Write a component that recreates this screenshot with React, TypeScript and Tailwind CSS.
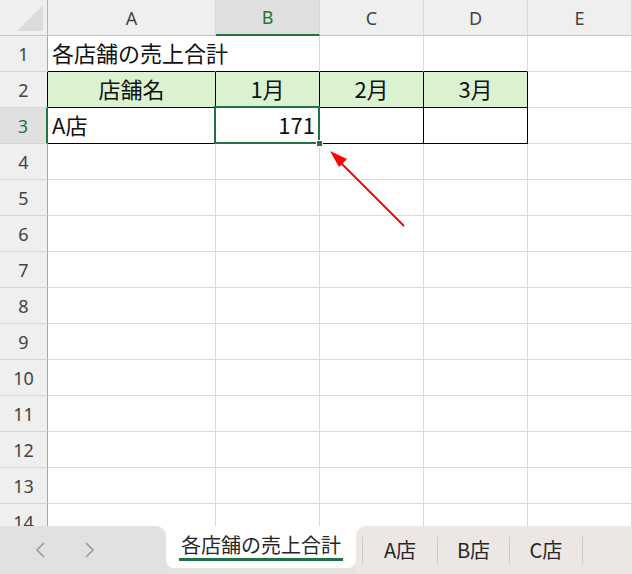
import React from "react";

type CellProps = {
  text?: string;
  align?: "left" | "center" | "right";
  fill?: boolean;
  right?: "grid" | "black" | "none";
  bottom?: "grid" | "black";
};

const cols = ["A", "B", "C", "D", "E"];

// sheet content, keyed by row number
const sheet: Record<number, CellProps[]> = {
  1: [
    { text: "各店舗の売上合計", align: "left", right: "none", bottom: "black" },
    { bottom: "black" },
    { bottom: "black" },
    { bottom: "black" },
    {},
  ],
  2: [
    { text: "店舗名", align: "center", fill: true, right: "black", bottom: "black" },
    { text: "1月", align: "center", fill: true, right: "black", bottom: "black" },
    { text: "2月", align: "center", fill: true, right: "black", bottom: "black" },
    { text: "3月", align: "center", fill: true, right: "black", bottom: "black" },
    {},
  ],
  3: [
    { text: "A店", align: "left", right: "black", bottom: "black" },
    { text: "171", align: "right", right: "black", bottom: "black" },
    { right: "black", bottom: "black" },
    { right: "black", bottom: "black" },
    {},
  ],
};

function Cell({ text, align = "left", fill, right = "grid", bottom = "grid" }: CellProps) {
  const r =
    right === "black" ? "border-r-black" : right === "none" ? "border-r-transparent" : "border-r-[#dadada]";
  const b = bottom === "black" ? "border-b-black" : "border-b-[#dadada]";
  const j = align === "center" ? "justify-center" : align === "right" ? "justify-end" : "justify-start";
  return (
    <div
      className={`relative flex h-[36px] items-center whitespace-nowrap border-r border-b px-[4px] pb-[3px] text-[22px] leading-none text-[#111] ${r} ${b} ${j} ${
        fill ? "bg-[#daf2d0]" : ""
      }`}
      style={{ fontFamily: '"Noto Sans CJK JP", "Noto Sans", sans-serif' }}
    >
      {text}
    </div>
  );
}

function RowHeader({ n }: { n: number }) {
  const selected = n === 3;
  const edge = selected ? "border-r-2 border-r-[#217346]" : n === 2 ? "border-r border-r-black" : "border-r border-r-[#a6a6a6]";
  return (
    <div
      className={`flex h-[36px] items-center justify-center border-b border-b-[#d6d6d6] text-[18px] leading-none ${edge} ${
        selected ? "bg-[#e0e0e0] text-[#217346]" : "bg-[#efefef] text-[#444]"
      }`}
      style={{ fontFamily: '"Noto Sans", sans-serif' }}
    >
      {n}
    </div>
  );
}

export default function App() {
  const rows = Array.from({ length: 14 }, (_, i) => i + 1);

  return (
    <div className="relative h-[574px] w-[632px] overflow-hidden bg-white">
      <div className="h-[526px] overflow-hidden">
        <div className="grid grid-cols-[48px_168px_104px_104px_104px_104px]">
          {/* corner */}
          <div className="relative h-[36px] border-r border-b border-r-[#b5b5b5] border-b-[#c4c4c4] bg-[#efefef]">
            <svg className="absolute left-0 top-0" width="48" height="36">
              <polygon points="43,5 43,31 17,31" fill="#dcdcdc" />
            </svg>
          </div>
          {cols.map((c) => {
            const sel = c === "B";
            return (
              <div
                key={c}
                className={`flex h-[36px] items-center justify-center border-r border-r-[#d6d6d6] text-[18px] leading-none ${
                  sel ? "border-b-2 border-b-[#217346] bg-[#e0e0e0] text-[#217346]" : "border-b border-b-[#c4c4c4] bg-[#efefef] text-[#444]"
                }`}
                style={{ fontFamily: '"Noto Sans", sans-serif' }}
              >
                {c}
              </div>
            );
          })}

          {rows.map((n) => (
            <React.Fragment key={n}>
              <RowHeader n={n} />
              {(sheet[n] ?? [{}, {}, {}, {}, {}]).map((cell, i) => (
                <Cell key={i} {...cell} />
              ))}
            </React.Fragment>
          ))}
        </div>
      </div>

      {/* active cell B3 */}
      <div className="pointer-events-none absolute left-[214px] top-[106px] h-[38px] w-[106px] border-2 border-[#217346]" />
      <div className="pointer-events-none absolute left-[316px] top-[140px] h-[7px] w-[7px] border border-white bg-[#217346]" />

      {/* red arrow */}
      <svg className="pointer-events-none absolute left-0 top-0" width="632" height="574">
        <line x1="404" y1="226" x2="338" y2="160" stroke="#ff0000" strokeWidth="2" />
        <polygon points="330,151 347,159 339,167" fill="#ff0000" />
      </svg>

      {/* sheet tabs */}
      <div className="flex h-[48px] bg-white" style={{ fontFamily: '"Noto Sans CJK JP", "Noto Sans", sans-serif' }}>
        <div className="flex w-[166px] items-center gap-[30px] rounded-tr-[10px] bg-[#e1e1e1] pl-[32px]">
          <svg width="18" height="20" viewBox="0 0 18 20">
            <polyline points="12,3 5,10 12,17" fill="none" stroke="#9a9a9a" strokeWidth="1.6" />
          </svg>
          <svg width="18" height="20" viewBox="0 0 18 20">
            <polyline points="6,3 13,10 6,17" fill="none" stroke="#9a9a9a" strokeWidth="1.6" />
          </svg>
        </div>
        <div className="flex w-[190px] flex-col bg-[#e5e2e2]">
          <div className="flex h-[42px] items-center justify-center rounded-b-[8px] bg-white">
            <span className="mt-[2px] border-b-[3px] border-[#217346] px-[2px] pb-[3px] text-[20px] leading-none text-[#262626]">
              各店舗の売上合計
            </span>
          </div>
        </div>
        <div className="flex flex-1 items-center rounded-tl-[10px] bg-[#ece6e5] pl-[6px] text-[20px] leading-none text-[#262626]">
          <div className="h-[27px] w-px bg-[#cfcaca]" />
          <div className="flex w-[74px] justify-center">A店</div>
          <div className="h-[27px] w-px bg-[#cfcaca]" />
          <div className="flex w-[71px] justify-center">B店</div>
          <div className="h-[27px] w-px bg-[#cfcaca]" />
          <div className="flex w-[72px] justify-center">C店</div>
          <div className="h-[27px] w-px bg-[#cfcaca]" />
        </div>
      </div>
    </div>
  );
}
